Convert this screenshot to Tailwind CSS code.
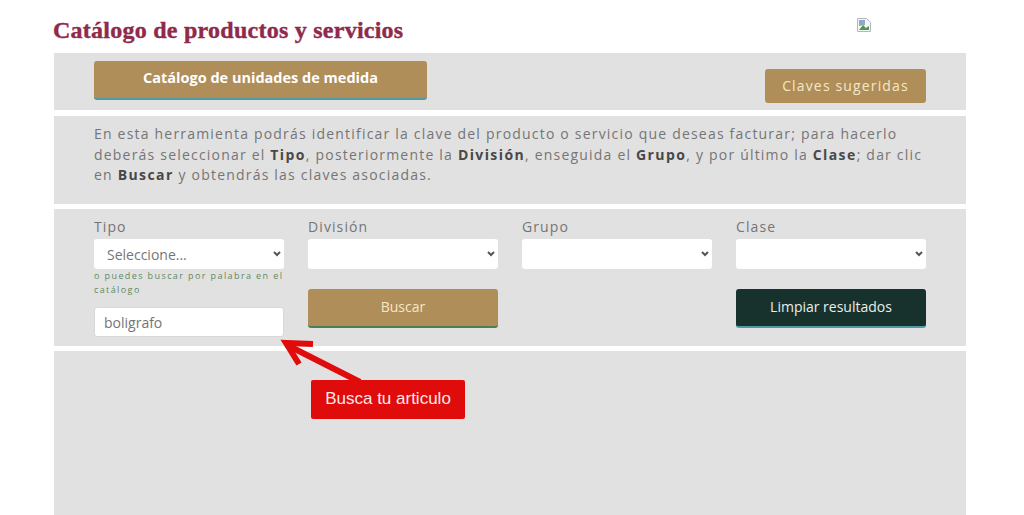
<!DOCTYPE html>
<html lang="en">

<head>
  <meta charset="UTF-8">
  <meta name="viewport" content="width=device-width, initial-scale=1.0">
  <title>Catálogo de productos y servicios</title>
  <script src="https://cdn.jsdelivr.net/npm/@tailwindcss/browser@4"></script>
</head>

<body class="bg-white font-['Open_Sans',sans-serif] text-[#757575] h-[515px] overflow-hidden relative">
  <!-- Header -->
  <header class="h-[53px] pl-[53px] pr-[58px] flex justify-between">
    <h1 class="mt-[15px] text-[24px] leading-[30px] font-bold text-[#8f2a4b] font-['Liberation_Serif',serif] tracking-[0.25px] [-webkit-text-stroke:0.4px_#8f2a4b]">Catálogo de productos y servicios</h1>
    <!-- Broken image -->
    <svg class="mt-[18px] mr-[95px]" width="14" height="14" viewBox="0 0 14 14">
      <path d="M0.5 0.5H9.5L13.5 4.5V13.5H0.5Z" fill="#f4f6fb" stroke="#b4b8be" />
      <path d="M2 2H8V7L2 8Z" fill="#8fa8c8" />
      <path d="M2 12L6 7L9 10L12 8V12Z" fill="#4f9a48" />
    </svg>
  </header>

  <main class="mx-[54px] w-[912px]">
    <!-- Top buttons -->
    <section class="bg-[#e1e1e1] h-[57px] pl-[40px] pr-[40px] flex justify-between">
      <button class="mt-[8px] w-[333px] h-[39px] bg-[#b08e59] border-b-[2px] border-[#4f9aa3] rounded-[3px] text-white text-[14.5px] font-bold pb-[3px]">Catálogo de unidades de medida</button>
      <button class="mt-[16px] w-[161px] h-[34px] bg-[#b08e59] rounded-[3px] text-[#f6e7c6] text-[14px] tracking-[1.15px] pb-[2px]">Claves sugeridas</button>
    </section>

    <!-- Instructions -->
    <section class="bg-[#e1e1e1] h-[88px] mt-[6px] pl-[40px] pr-[40px] pt-[8px] text-[14px] leading-[20.5px] tracking-[1.2px]">
      <p>En esta herramienta podrás identificar la clave del producto o servicio que deseas facturar; para hacerlo deberás seleccionar el <b class="text-[#484848] tracking-[1.4px]">Tipo</b>, posteriormente la <b class="text-[#484848] tracking-[1.4px]">División</b>, enseguida el <b class="text-[#484848] tracking-[1.4px]">Grupo</b>, y por último la <b class="text-[#484848] tracking-[1.4px]">Clase</b>; dar clic en <b class="text-[#484848] tracking-[1.4px]">Buscar</b> y obtendrás las claves asociadas.</p>
    </section>

    <!-- Filters -->
    <section class="bg-[#e1e1e1] h-[137px] mt-[5px] pl-[40px] pr-[40px] pt-[8px] grid grid-cols-4 gap-x-[24px] content-start">
      <div>
        <label class="block text-[14px] leading-[20px] mb-[2px] tracking-[1.1px]">Tipo</label>
        <div class="relative">
          <select class="appearance-none block w-full h-[30px] bg-white rounded-[3px] text-[14px] pl-[13px] text-[#757575]"><option>Seleccione...</option></select>
          <svg class="absolute right-[3px] top-[12px] pointer-events-none" width="8" height="6" viewBox="0 0 8 6"><path d="M1 1L4 4L7 1" fill="none" stroke="#555" stroke-width="2" /></svg>
        </div>
        <p class="text-[9px] leading-[14px] tracking-[1.4px] text-[#5d8a62]">o puedes buscar por palabra en el catálogo</p>
        <input class="mt-[10px] w-full h-[30px] bg-white rounded-[3px] border border-[#d8d8d8] text-[14px] px-[9px] text-[#757575]" value="boligrafo">
      </div>
      <div>
        <label class="block text-[14px] leading-[20px] mb-[2px] tracking-[1.1px]">División</label>
        <div class="relative">
          <select class="appearance-none block w-full h-[30px] bg-white rounded-[3px]"><option></option></select>
          <svg class="absolute right-[3px] top-[12px] pointer-events-none" width="8" height="6" viewBox="0 0 8 6"><path d="M1 1L4 4L7 1" fill="none" stroke="#555" stroke-width="2" /></svg>
        </div>
        <button class="mt-[20px] w-full h-[39px] bg-[#b08e59] border-b-[2px] border-[#4c8052] rounded-[3px] text-[#f6e7c6] text-[14px] pb-[2px]">Buscar</button>
      </div>
      <div>
        <label class="block text-[14px] leading-[20px] mb-[2px] tracking-[1.1px]">Grupo</label>
        <div class="relative">
          <select class="appearance-none block w-full h-[30px] bg-white rounded-[3px]"><option></option></select>
          <svg class="absolute right-[3px] top-[12px] pointer-events-none" width="8" height="6" viewBox="0 0 8 6"><path d="M1 1L4 4L7 1" fill="none" stroke="#555" stroke-width="2" /></svg>
        </div>
      </div>
      <div>
        <label class="block text-[14px] leading-[20px] mb-[2px] tracking-[1.1px]">Clase</label>
        <div class="relative">
          <select class="appearance-none block w-full h-[30px] bg-white rounded-[3px]"><option></option></select>
          <svg class="absolute right-[3px] top-[12px] pointer-events-none" width="8" height="6" viewBox="0 0 8 6"><path d="M1 1L4 4L7 1" fill="none" stroke="#555" stroke-width="2" /></svg>
        </div>
        <button class="mt-[20px] w-full h-[39px] bg-[#17322d] border-b-[2px] border-[#4f9aa3] rounded-[3px] text-[#e8efe9] text-[14px] pb-[2px]">Limpiar resultados</button>
      </div>
    </section>

    <!-- Results -->
    <section class="bg-[#e1e1e1] h-[164px] mt-[5px]"></section>
  </main>

  <!-- Callout over the form -->
  <svg class="absolute left-[280px] top-[338px]" width="90" height="50" viewBox="0 0 90 50">
    <path d="M80 44L7 7" stroke="#e00b0b" stroke-width="6" fill="none" />
    <path d="M33 6L6 5L19 26" stroke="#e00b0b" stroke-width="6" fill="none" stroke-linejoin="miter" />
  </svg>
  <div class="absolute left-[311px] top-[380px] w-[154px] h-[39px] bg-[#e00b0b] rounded-[2px] text-[#fbe9e9] font-['Liberation_Sans',sans-serif] text-[17px] leading-[38px] text-center">Busca tu articulo</div>
</body>

</html>
